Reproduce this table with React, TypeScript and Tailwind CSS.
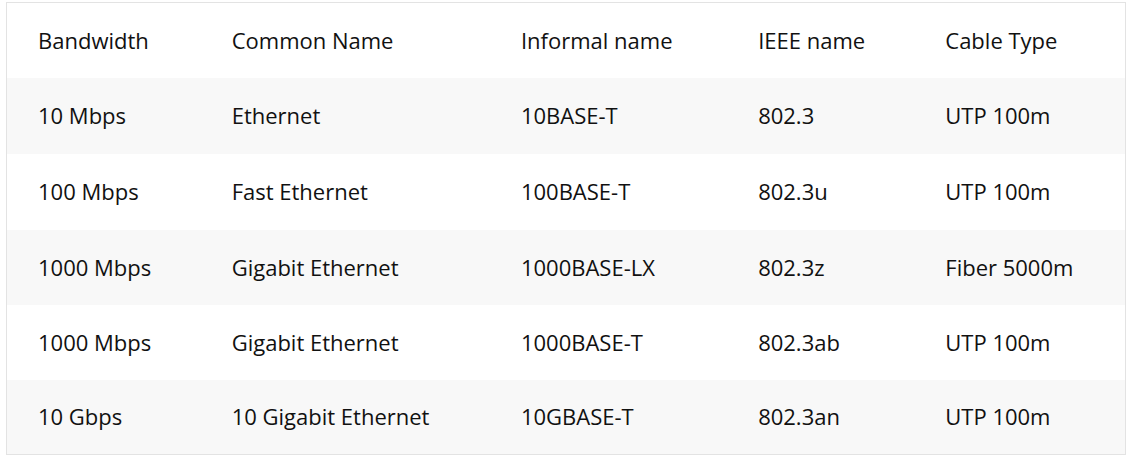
import React from "react";

const rows = [
  ["10 Mbps", "Ethernet", "10BASE-T", "802.3", "UTP 100m"],
  ["100 Mbps", "Fast Ethernet", "100BASE-T", "802.3u", "UTP 100m"],
  ["1000 Mbps", "Gigabit Ethernet", "1000BASE-LX", "802.3z", "Fiber 5000m"],
  ["1000 Mbps", "Gigabit Ethernet", "1000BASE-T", "802.3ab", "UTP 100m"],
  ["10 Gbps", "10 Gigabit Ethernet", "10GBASE-T", "802.3an", "UTP 100m"],
];

const heights = ["h-[76px]", "h-[76px]", "h-[75px]", "h-[75px]", "h-[75px]"];

const App: React.FC = () => {
  return (
    <div className="bg-white w-[1134px] h-[460px] pt-[2px] pl-[6px] font-['Open_Sans',sans-serif] text-[22px] text-[#111]">
      <table className="table-fixed border-collapse w-[1120px] border border-[#e3e3e3]">
        <colgroup>
          <col className="w-[194px]" />
          <col className="w-[289px]" />
          <col className="w-[237px]" />
          <col className="w-[187px]" />
          <col className="w-[211px]" />
        </colgroup>
        <thead>
          <tr className="h-[75px] bg-white">
            {["Bandwidth", "Common Name", "Informal name", "IEEE name", "Cable Type"].map((h) => (
              <th key={h} className="text-left font-normal pl-[31px] align-middle">
                {h}
              </th>
            ))}
          </tr>
        </thead>
        <tbody>
          {rows.map((r, i) => (
            <tr key={i} className={`${heights[i]} ${i % 2 === 0 ? "bg-[#f8f8f8]" : "bg-white"}`}>
              {r.map((c, j) => (
                <td key={j} className="pl-[31px] align-middle">
                  {c}
                </td>
              ))}
            </tr>
          ))}
        </tbody>
      </table>
    </div>
  );
};

export default App;
